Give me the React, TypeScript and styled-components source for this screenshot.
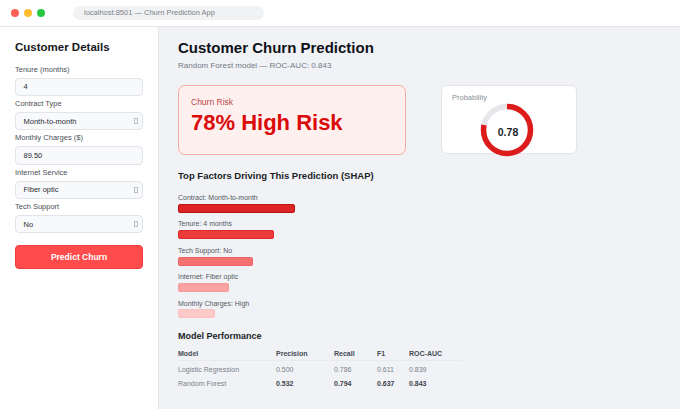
import React from 'react';
import styled, { createGlobalStyle } from 'styled-components';

const GlobalStyle = createGlobalStyle`
  html, body {
    margin: 0;
    padding: 0;
    background: #f0f2f6;
  }
  body, button, input {
    font-family: 'Liberation Sans', Arial, sans-serif;
  }
  * {
    box-sizing: border-box;
  }
`;

type Field = { label: string; value: string; select?: boolean };

const fields: Field[] = [
  { label: 'Tenure (months)', value: '4' },
  { label: 'Contract Type', value: 'Month-to-month', select: true },
  { label: 'Monthly Charges ($)', value: '89.50' },
  { label: 'Internet Service', value: 'Fiber optic', select: true },
  { label: 'Tech Support', value: 'No', select: true },
];

const factors = [
  { label: 'Contract: Month-to-month', width: 117, fill: '#dd2323', edge: '#b81414' },
  { label: 'Tenure: 4 months', width: 96, fill: '#ee3b3b', edge: '#dc2a2a' },
  { label: 'Tech Support: No', width: 75, fill: '#f57070', edge: '#ee6464' },
  { label: 'Internet: Fiber optic', width: 51, fill: '#fba3a3', edge: '#f79a9a' },
  { label: 'Monthly Charges: High', width: 37, fill: '#fdc9c9', edge: '#fbc0c0' },
];

const models = [
  { name: 'Logistic Regression', values: ['0.500', '0.786', '0.611', '0.839'], best: false },
  { name: 'Random Forest', values: ['0.532', '0.794', '0.637', '0.843'], best: true },
];

function Gauge({ value }: { value: number }) {
  const r = 23.5;
  const c = 2 * Math.PI * r;
  return (
    <GaugeWrap>
      <svg width="54" height="54" viewBox="0 0 54 54">
        <circle cx="27" cy="27" r={r} fill="none" stroke="#e6e7ea" strokeWidth="5.5" />
        <circle
          cx="27"
          cy="27"
          r={r}
          fill="none"
          stroke="#dd1b1b"
          strokeWidth="5.5"
          strokeDasharray={`${c * value} ${c}`}
          transform="rotate(-90 27 27)"
        />
      </svg>
      <GaugeValue>{value.toFixed(2)}</GaugeValue>
    </GaugeWrap>
  );
}

export default function App() {
  return (
    <Page>
      <GlobalStyle />
      <TopBar>
        <Lights>
          <Light color="#ff5f57" />
          <Light color="#febc2e" />
          <Light color="#28c840" />
        </Lights>
        <Address>localhost:8501 — Churn Prediction App</Address>
      </TopBar>
      <Body>
        <Sidebar>
          <SideTitle>Customer Details</SideTitle>
          {fields.map((f) => (
            <FieldGroup key={f.label}>
              <FieldLabel>{f.label}</FieldLabel>
              <InputBox>
                <span>{f.value}</span>
                {f.select && <Tofu />}
              </InputBox>
            </FieldGroup>
          ))}
          <PredictButton>Predict Churn</PredictButton>
        </Sidebar>
        <Main>
          <Title>Customer Churn Prediction</Title>
          <Subtitle>Random Forest model — ROC-AUC: 0.843</Subtitle>
          <Cards>
            <RiskCard>
              <RiskLabel>Churn Risk</RiskLabel>
              <RiskValue>78% High Risk</RiskValue>
            </RiskCard>
            <ProbCard>
              <ProbLabel>Probability</ProbLabel>
              <Gauge value={0.78} />
            </ProbCard>
          </Cards>
          <SectionTitle>Top Factors Driving This Prediction (SHAP)</SectionTitle>
          <Factors>
            {factors.map((f) => (
              <FactorRow key={f.label}>
                <FactorLabel>{f.label}</FactorLabel>
                <Bar $fill={f.fill} $edge={f.edge} style={{ width: f.width }} />
              </FactorRow>
            ))}
          </Factors>
          <PerfTitle>Model Performance</PerfTitle>
          <Table>
            <HeadRow>
              <span>Model</span>
              <span>Precision</span>
              <span>Recall</span>
              <span>F1</span>
              <span>ROC-AUC</span>
            </HeadRow>
            {models.map((m) => (
              <DataRow key={m.name} $best={m.best}>
                <span>{m.name}</span>
                {m.values.map((v, i) => (
                  <span key={i}>{v}</span>
                ))}
              </DataRow>
            ))}
          </Table>
        </Main>
      </Body>
    </Page>
  );
}

const Page = styled.div`
  width: 680px;
  height: 409px;
  display: flex;
  flex-direction: column;
  overflow: hidden;
  background: #f0f2f6;
`;

const TopBar = styled.header`
  height: 27px;
  flex-shrink: 0;
  display: flex;
  align-items: center;
  background: #ffffff;
  border-bottom: 1px solid #e6e7ea;
  padding: 0 0 1px 11px;
`;

const Lights = styled.div`
  display: flex;
  gap: 5px;
  margin-right: 28px;
`;

const Light = styled.span<{ color: string }>`
  width: 8px;
  height: 8px;
  border-radius: 50%;
  background: ${(p) => p.color};
`;

const Address = styled.div`
  width: 191px;
  height: 14px;
  border-radius: 7px;
  background: #f1f2f4;
  color: #7a7f88;
  font-size: 7.5px;
  line-height: 14px;
  padding-left: 11px;
  white-space: nowrap;
`;

const Body = styled.div`
  flex: 1;
  display: flex;
  min-height: 0;
`;

const Sidebar = styled.aside`
  width: 159px;
  flex-shrink: 0;
  background: #ffffff;
  border-right: 1px solid #e4e6ea;
  padding: 13px 15px 0 15px;
  display: flex;
  flex-direction: column;
`;

const SideTitle = styled.h2`
  margin: 0 0 10.5px;
  font-size: 11.5px;
  line-height: 14px;
  font-weight: 700;
  color: #16181d;
`;

const FieldGroup = styled.div`
  display: flex;
  flex-direction: column;
  margin-bottom: 3px;
`;

const FieldLabel = styled.label`
  font-size: 7.5px;
  line-height: 10px;
  color: #4a4f57;
  margin-bottom: 3px;
`;

const InputBox = styled.div`
  width: 128px;
  height: 18.4px;
  display: flex;
  align-items: center;
  justify-content: space-between;
  padding: 0 4px 0 7.5px;
  background: #f8f9fb;
  border: 1px solid #e2e4e9;
  border-radius: 4px;
  font-size: 7.5px;
  color: #2b2e35;
`;

const Tofu = styled.span`
  width: 4px;
  height: 6px;
  border: 1px solid #b9bdc4;
`;

const PredictButton = styled.button`
  margin-top: 9px;
  width: 128px;
  height: 24px;
  border: 1px solid #f03c3c;
  border-radius: 4px;
  background: #ff4b4b;
  color: #ffffff;
  font-size: 8.5px;
  font-weight: 700;
  padding: 0;
`;

const Main = styled.main`
  flex: 1;
  padding: 12px 0 0 19px;
  display: flex;
  flex-direction: column;
  align-items: flex-start;
`;

const Title = styled.h1`
  margin: 0;
  font-size: 15px;
  line-height: 18px;
  font-weight: 700;
  color: #101218;
`;

const Subtitle = styled.p`
  margin: 4px 0 0;
  font-size: 8px;
  line-height: 10px;
  color: #747983;
`;

const Cards = styled.div`
  margin-top: 14px;
  display: flex;
  gap: 35px;
`;

const RiskCard = styled.div`
  width: 228px;
  height: 70px;
  background: #fff0f0;
  border: 1.5px solid #f7a8a8;
  border-radius: 7px;
  padding: 11px 0 0 12px;
`;

const RiskLabel = styled.div`
  font-size: 8.5px;
  line-height: 11px;
  color: #b44848;
`;

const RiskValue = styled.div`
  margin-top: 2px;
  font-size: 22px;
  line-height: 26px;
  font-weight: 700;
  color: #db0a0a;
`;

const ProbCard = styled.div`
  width: 136px;
  height: 69px;
  background: #ffffff;
  border: 1px solid #e3e5e9;
  border-radius: 6px;
  padding: 7px 0 0 10px;
  display: flex;
  flex-direction: column;
`;

const ProbLabel = styled.div`
  font-size: 7.5px;
  line-height: 10px;
  color: #8a8f98;
`;

const GaugeWrap = styled.div`
  position: relative;
  width: 54px;
  height: 54px;
  margin-left: 28px;
`;

const GaugeValue = styled.span`
  position: absolute;
  inset: 0;
  display: flex;
  align-items: center;
  justify-content: center;
  padding: 3px 0 0 2px;
  font-size: 10.5px;
  font-weight: 700;
  color: #1b1e26;
`;

const SectionTitle = styled.h3`
  margin: 15px 0 0;
  font-size: 9.5px;
  line-height: 12px;
  font-weight: 700;
  color: #1b1e26;
`;

const Factors = styled.div`
  margin-top: 11px;
  display: flex;
  flex-direction: column;
  gap: 6.6px;
`;

const FactorRow = styled.div`
  display: flex;
  flex-direction: column;
  gap: 1.8px;
`;

const FactorLabel = styled.div`
  font-size: 7px;
  line-height: 9px;
  color: #555a63;
`;

const Bar = styled.div<{ $fill: string; $edge: string }>`
  height: 9px;
  background: ${(p) => p.$fill};
  border: 1px solid ${(p) => p.$edge};
  border-radius: 2px;
`;

const PerfTitle = styled.h3`
  margin: 13px 0 0;
  font-size: 9px;
  line-height: 11px;
  font-weight: 700;
  color: #1b1e26;
`;

const Table = styled.div`
  margin-top: 7px;
  width: 284px;
  display: flex;
  flex-direction: column;
`;

const Row = styled.div`
  display: grid;
  grid-template-columns: 98px 58px 43px 32px 53px;
  font-size: 7px;
  line-height: 9px;
`;

const HeadRow = styled(Row)`
  font-weight: 700;
  color: #454a53;
  padding-bottom: 1.5px;
  border-bottom: 1px solid #e8eaee;
  margin-bottom: 2px;
`;

const DataRow = styled(Row)<{ $best: boolean }>`
  padding: 2.3px 0;
  color: #7a7f88;
  span + span {
    font-weight: ${(p) => (p.$best ? 700 : 400)};
    color: ${(p) => (p.$best ? '#3f434b' : '#7a7f88')};
  }
`;
